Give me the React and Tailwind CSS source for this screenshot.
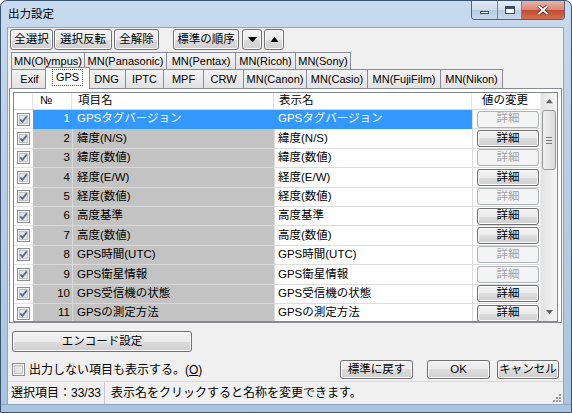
import React from 'react';

const rows = [
  ['GPSタグバージョン', false],
  ['緯度(N/S)', true],
  ['緯度(数値)', false],
  ['経度(E/W)', true],
  ['経度(数値)', false],
  ['高度基準', true],
  ['高度(数値)', true],
  ['GPS時間(UTC)', false],
  ['GPS衛星情報', false],
  ['GPS受信機の状態', true],
  ['GPSの測定方法', true],
];

const tabsTop = [
  ['MN(Olympus)', 74],
  ['MN(Panasonic)', 83],
  ['MN(Pentax)', 70],
  ['MN(Ricoh)', 61],
  ['MN(Sony)', 56],
];

const tabsBottom = [
  ['Exif', 37],
  ['GPS', 45],
  ['DNG', 39],
  ['IPTC', 39],
  ['MPF', 41],
  ['CRW', 41],
  ['MN(Canon)', 64],
  ['MN(Casio)', 62],
  ['MN(FujiFilm)', 74],
  ['MN(Nikon)', 63],
];

const Btn = ({ className = '', disabled, children }) => (
  <div
    className={`flex items-center justify-center rounded-[3px] border ${
      disabled
        ? 'border-[#adb2b5] bg-[#f4f4f4] text-[#a3a3a3]'
        : 'border-[#707070] bg-[linear-gradient(#f2f2f2_0%,#ebebeb_50%,#dddddd_50%,#cfcfcf_100%)] text-black shadow-[inset_0_0_0_1px_#fbfbfb]'
    } ${className}`}
  >
    {children}
  </div>
);

const Check = ({ checked = true }) => (
  <svg width="13" height="13" viewBox="0 0 13 13">
    <rect x="0.5" y="0.5" width="12" height="12" fill="#f4f4f4" stroke="#8e8f8f" />
    <rect x="2.5" y="2.5" width="8" height="8" fill="#e4e4e4" stroke="#c4c4c4" />
    {checked && <path d="M3.2 6.4 L5.4 8.8 L9.8 3.4" fill="none" stroke="#5a6a8a" strokeWidth="1.8" />}
  </svg>
);

const Tri = ({ up, color = '#000', size = 9 }) => (
  <svg width={size} height={size * 0.6} viewBox="0 0 10 6">
    <path d={up ? 'M0 6 L5 0 L10 6 Z' : 'M0 0 L10 0 L5 6 Z'} fill={color} />
  </svg>
);

export default function App() {
  return (
    <div className="w-[572px] h-[413px] flex flex-col overflow-hidden rounded-t-[7px] border border-[#3a5370] bg-[linear-gradient(180deg,#c7daee_0%,#b9cfe6_40%,#aac4df_100%)] font-['Liberation_Sans','Noto_Sans_CJK_JP',sans-serif] text-[11.5px] leading-none text-black">
      {/* title bar */}
      <div className="h-[26px] flex items-start justify-between shrink-0">
        <div className="pl-[7px] pt-[8px] text-[11.5px]">出力設定</div>
        <div className="flex mr-[6px] h-[19px] rounded-b-[4px] border border-t-0 border-[#4d6480] overflow-hidden">
          <div className="w-[26px] flex items-end justify-center pb-[5px] bg-[linear-gradient(#e3ecf6_0%,#cddbea_50%,#b8cbe0_50%,#c9d9ea_100%)] border-r border-[#6e86a3]">
            <div className="w-[9px] h-[3px] bg-white border border-[#3b4c62]" />
          </div>
          <div className="w-[24px] flex items-center justify-center bg-[linear-gradient(#e3ecf6_0%,#cddbea_50%,#b8cbe0_50%,#c9d9ea_100%)] border-r border-[#6e86a3]">
            <div className="w-[10px] h-[8px] border border-[#3b4c62] border-t-[3px] bg-white" />
          </div>
          <div className="w-[42px] flex items-center justify-center bg-[linear-gradient(#eab4a8_0%,#d98672_50%,#c24a2e_50%,#d2704f_100%)]">
            <svg width="12" height="10" viewBox="0 0 12 10">
              <path d="M1.5 1 L10.5 9 M10.5 1 L1.5 9" stroke="#3b1a12" strokeWidth="3.4" />
              <path d="M1.5 1 L10.5 9 M10.5 1 L1.5 9" stroke="#ffffff" strokeWidth="2" />
            </svg>
          </div>
        </div>
      </div>

      <div className="flex flex-1 min-h-0">
        <div className="w-[6px] shrink-0" />
        {/* client */}
        <div className="w-[557px] flex flex-col bg-[#f0f0f0] border border-[#8ea6c1] border-b-0">
          {/* toolbar */}
          <div className="flex items-center h-[21px] mt-[1px] pl-[2px]">
            <Btn className="w-[43px] h-[21px]">全選択</Btn>
            <Btn className="w-[58px] h-[21px] ml-[1px]">選択反転</Btn>
            <Btn className="w-[45px] h-[21px] ml-[2px]">全解除</Btn>
            <Btn className="w-[66px] h-[21px] ml-[14px]">標準の順序</Btn>
            <Btn className="w-[20px] h-[21px] ml-[3px]"><Tri /></Btn>
            <Btn className="w-[20px] h-[21px] ml-[2px]"><Tri up /></Btn>
          </div>

          {/* tabs row 1 */}
          <div className="flex h-[17px] mt-[2px] pl-[3px] items-end text-[11px]">
            {tabsTop.map(([t, w], i) => (
              <div
                key={t}
                style={{ width: w }}
                className={`h-[17px] flex items-center justify-center border border-b-0 border-[#898c95] bg-[linear-gradient(#f3f3f3,#e2e2e2)] ${i ? '-ml-px' : ''}`}
              >
                {t}
              </div>
            ))}
          </div>

          {/* tabs row 2 */}
          <div className="flex h-[19px] pl-[3px] items-end relative z-10 text-[11px]">
            {tabsBottom.map(([t, w], i) =>
              t === 'GPS' ? (
                <div
                  key={t}
                  style={{ width: w }}
                  className="h-[22px] -ml-[3px] -mr-[2px] -mb-px relative z-10 flex items-center justify-center border border-b-0 border-[#898c95] bg-white"
                >
                  <span className="px-[3px] py-[2px] outline outline-1 outline-dotted outline-[#555] -mt-[2px]">GPS</span>
                </div>
              ) : (
                <div
                  key={t}
                  style={{ width: w }}
                  className={`h-[19px] flex items-center justify-center border border-b-0 border-[#898c95] bg-[linear-gradient(#f3f3f3,#e2e2e2)] ${i ? '-ml-px' : ''}`}
                >
                  {t}
                </div>
              )
            )}
          </div>

          {/* panel */}
          <div className="mx-[1px] h-[235px] border border-[#898c95] bg-white pt-[3px] pl-[3px]">
            <div className="w-[545px] h-[230px] border border-[#828790] flex bg-white">
              <div className="w-[526px] flex flex-col overflow-hidden">
                {/* header */}
                <div className="flex h-[17px] shrink-0 border-b border-[#d5d5d5]">
                  <div className="w-[19px] border-r border-[#e5e5e5]" />
                  <div className="w-[39px] border-r border-[#e5e5e5] flex items-center pl-[7px]">№</div>
                  <div className="w-[202px] border-r border-[#e5e5e5] flex items-center pl-[6px]">項目名</div>
                  <div className="w-[198px] border-r border-[#e5e5e5] flex items-center pl-[5px]">表示名</div>
                  <div className="w-[68px] flex items-center justify-center pr-[2px]">値の変更</div>
                </div>
                {rows.map(([name, enabled], i) => {
                  const sel = i === 0;
                  return (
                    <div key={i} className="flex h-[19.4px] shrink-0">
                      <div className="w-[19px] flex items-center justify-center border-b border-[#e3e3e3]">
                        <Check />
                      </div>
                      <div
                        className={`w-[39px] flex items-center justify-end pr-[2px] border-b ${
                          sel ? 'bg-[#3399ff] text-white border-[#3399ff]' : 'bg-[#c3c3c3] border-[#d9d9d9]'
                        }`}
                      >
                        {i + 1}
                      </div>
                      <div
                        className={`w-[202px] flex items-center pl-[4px] border-b border-l ${
                          sel ? 'bg-[#3399ff] text-white border-[#3399ff]' : 'bg-[#c3c3c3] border-[#d9d9d9]'
                        }`}
                      >
                        {name}
                      </div>
                      <div
                        className={`w-[198px] flex items-center pl-[3px] border-b border-l ${
                          sel ? 'bg-[#3399ff] text-white border-[#3399ff]' : 'bg-white border-[#dcdcdc]'
                        }`}
                      >
                        {name}
                      </div>
                      <div className="w-[68px] flex items-center pl-[4px] border-b border-l border-[#dcdcdc]">
                        <Btn disabled={!enabled} className="w-[62px] h-[17px]">
                          詳細
                        </Btn>
                      </div>
                    </div>
                  );
                })}
              </div>
              {/* scrollbar */}
              <div className="w-[17px] flex flex-col bg-[linear-gradient(90deg,#e3e3e3,#f5f5f5)] border-l border-[#ececec]">
                <div className="h-[17px] flex items-center justify-center">
                  <Tri up color="#606060" size={7} />
                </div>
                <div className="flex-1 relative">
                  <div className="mx-[1px] h-[60px] rounded-[3px] border border-[#979797] bg-[linear-gradient(90deg,#f0f0f0,#dadada)] flex flex-col items-center justify-center gap-[2px]">
                    <div className="w-[6px] h-px bg-[#7a7a7a]" />
                    <div className="w-[6px] h-px bg-[#7a7a7a]" />
                    <div className="w-[6px] h-px bg-[#7a7a7a]" />
                  </div>
                </div>
                <div className="h-[17px] flex items-center justify-center">
                  <Tri color="#606060" size={7} />
                </div>
              </div>
            </div>
          </div>

          {/* encode */}
          <Btn className="ml-[4px] mt-[8px] w-[180px] h-[21px]">エンコード設定</Btn>

          {/* options row */}
          <div className="flex items-center h-[19px] mt-[8px] pl-[4px] pr-[4px]">
            <Check checked={false} />
            <span className="ml-[4px] text-[12px]">
              出力しない項目も表示する。(<span className="underline">O</span>)
            </span>
            <div className="flex-1" />
            <Btn className="w-[73px] h-[19px]">標準に戻す</Btn>
            <Btn className="w-[63px] h-[19px] ml-[14px]">OK</Btn>
            <Btn className="w-[62px] h-[19px] ml-[7px]">キャンセル</Btn>
          </div>

          {/* status bar */}
          <div className="flex items-center mt-[2px] flex-1 border-t border-[#d7d7d7] text-[12px] relative">
            <div className="pl-[3px] w-[97px] h-full flex items-center border-r border-[#c9c9c9]">選択項目：33/33</div>
            <div className="pl-[6px]">表示名をクリックすると名称を変更できます。</div>
            <div className="absolute right-[2px] bottom-[2px] grid grid-cols-3 gap-[1px]">
              {[0, 0, 1, 0, 1, 1, 1, 1, 1].map((v, k) => (
                <div key={k} className={`w-[2px] h-[2px] ${v ? 'bg-[#9a9a9a]' : ''}`} />
              ))}
            </div>
          </div>
        </div>
        <div className="flex-1" />
      </div>
      <div className="h-[8px] shrink-0 border-t border-[#8ea6c1]" />
    </div>
  );
}
